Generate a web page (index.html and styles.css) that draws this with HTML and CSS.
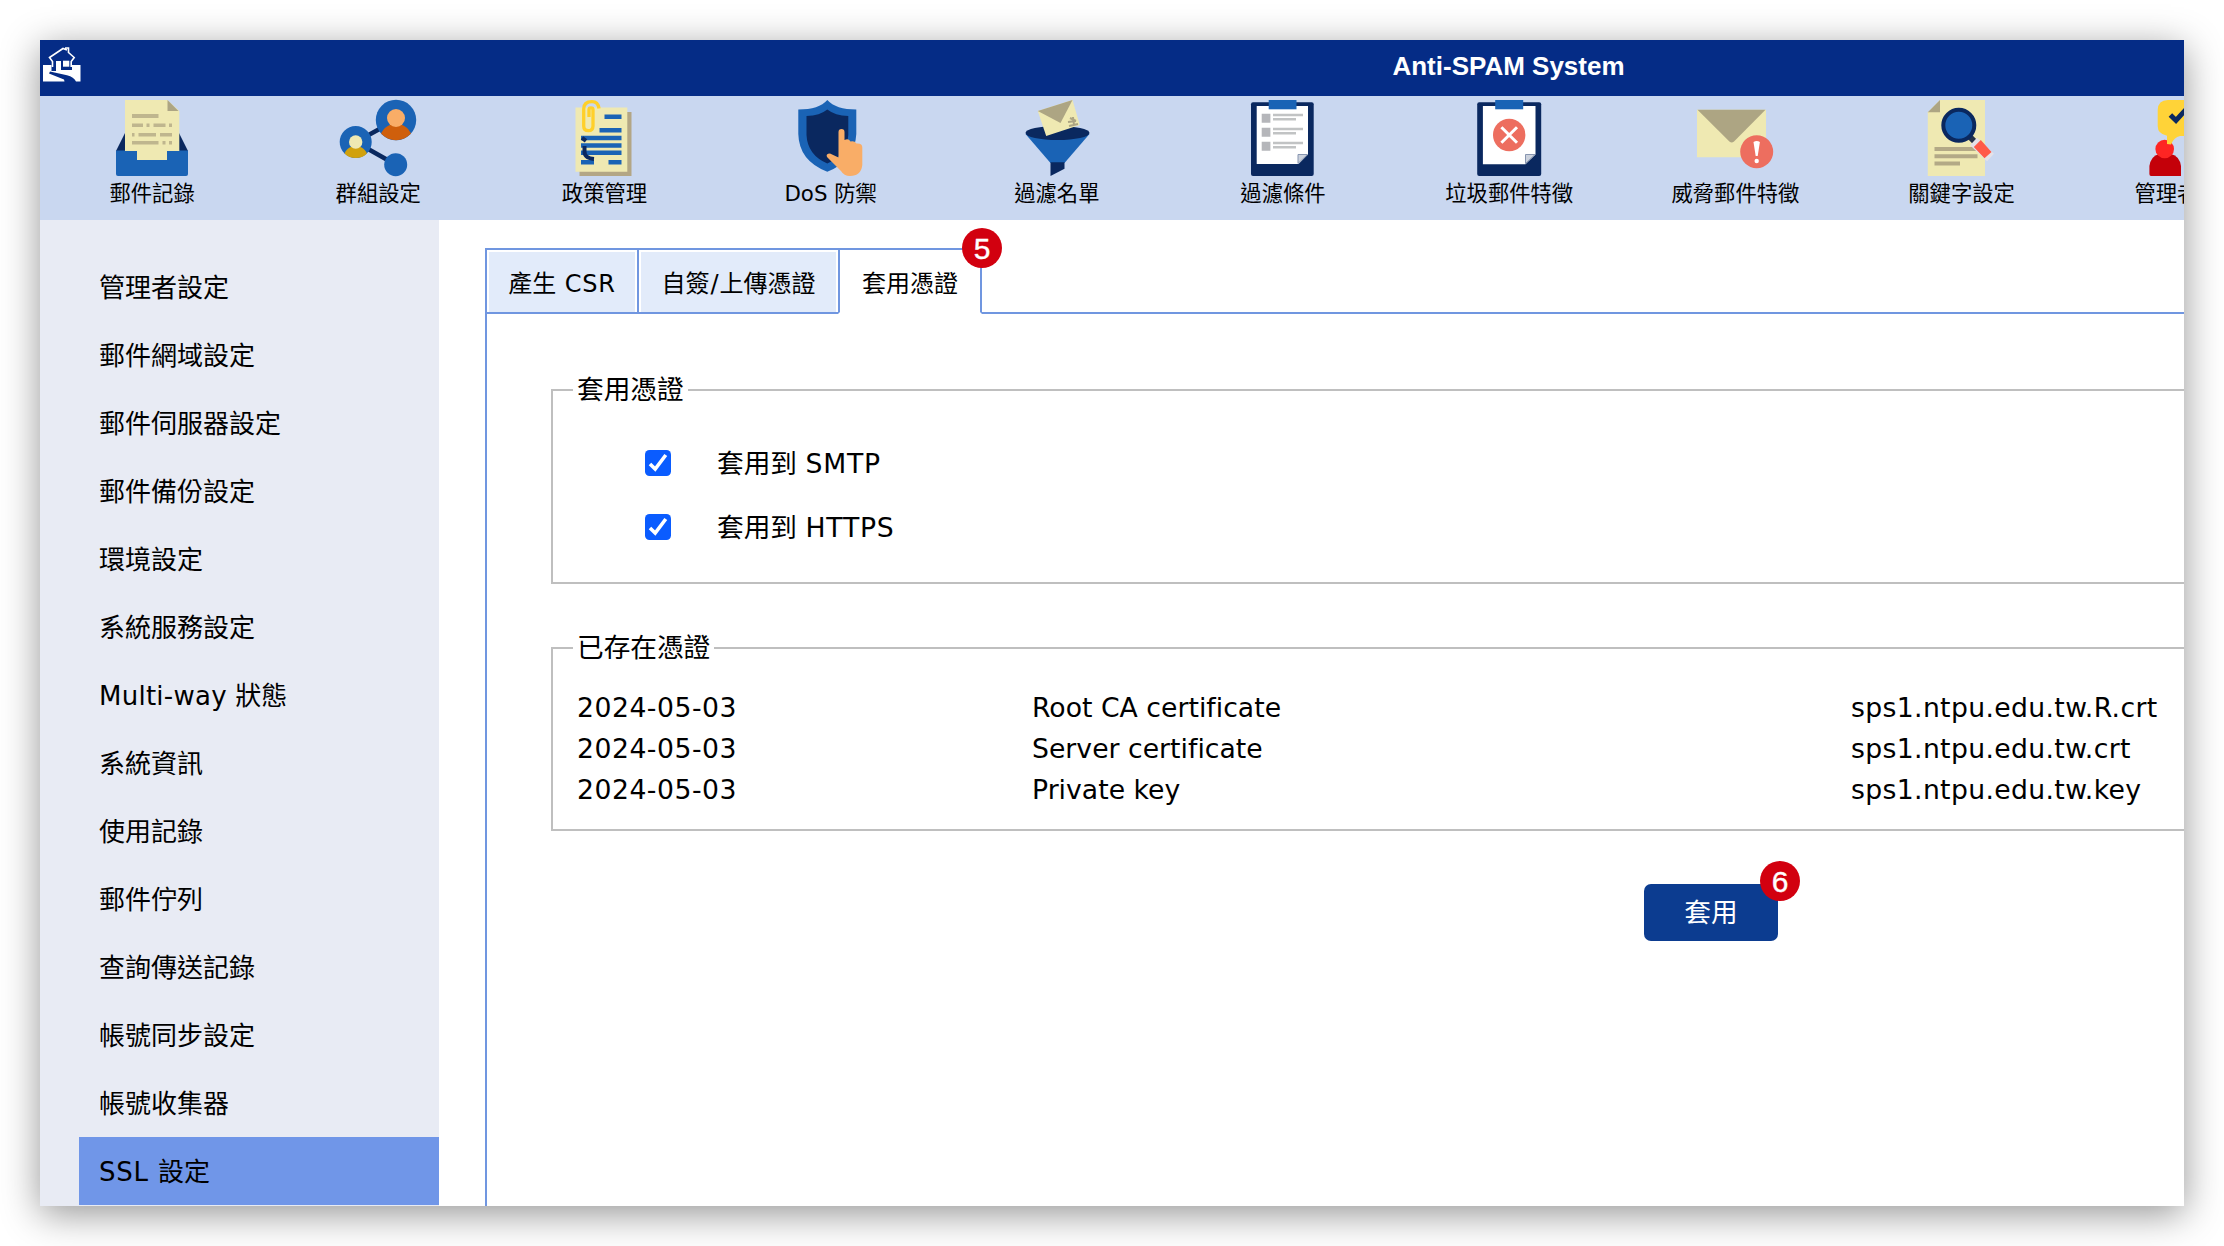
FILE: index.html
```html
<!DOCTYPE html>
<html lang="zh-Hant">
<head>
<meta charset="utf-8">
<title>Anti-SPAM System</title>
<link rel="stylesheet" href="styles.css">
</head>
<body>
<div class="window">
  <div class="page">
    <header class="header">
      <svg class="home" viewBox="0 0 38 35"><path fill="#fff" d="M0 18H8.500V24H13V14h5v9H29V18h8.500V34.500H33Q31 30 24 28.300L7 24.500 6 26.500 21 32.500 21.500 34.500H0z"/><path fill="none" stroke="#fff" stroke-width="1.600" d="M9.500 20V14.500L6.500 10.500 20 1.500l4 1.500M25.500 6V1H22M25.500 5.500l5.700 5-3 4V20"/><path fill="#fff" d="M20 13.700h6.300v6H20z"/></svg>
      <h1 class="title">Anti-SPAM System</h1>
    </header>
    <nav class="toolbar">
      <a class="tool">
        <svg class="icon" viewBox="0 0 76 76"><path fill="#0a285f" d="M2 51 11 33V51zM65 33l9 18h-9z"/><path fill="#1a63b5" d="M2 50.500H74V74a2 2 0 0 1-2 2H4a2 2 0 0 1-2-2z"/><path fill="#efe9b2" d="M11 0H53.500L65.300 11V51H53v9H23V51H11z"/><path fill="#ada583" d="M53.500 0v11h11z"/><path stroke="#bfb68e" stroke-width="4" d="M18 16H44.500"/><path stroke="#bfb68e" stroke-width="3.500" d="M18 25.300H29M32.500 25.300h3M39.500 25.300h12M55 25.300h3M18 34.700h2.500M24.500 34.700H42M46 34.700H58M18 42.700H44.500M48.500 42.700h3M55 42.700h3"/></svg>
        <span>郵件記錄</span></a>
      <a class="tool">
        <svg class="icon" viewBox="0 0 76 76"><path fill="none" stroke="#0a285f" stroke-width="4.500" d="M56 20 15.700 42 56 64.700"/><circle cx="56" cy="20" r="20.200" fill="#1a63b5"/><path fill="#cf5f0c" d="M41 33.500C45 26 50 24 56 24s11 2 15 9.500A20.200 20.200 0 0 1 41 33.500z"/><circle cx="56" cy="18" r="9" fill="#f9ad67"/><circle cx="15.700" cy="42" r="16" fill="#1a63b5"/><path fill="#d1a10d" d="M4.500 53.500C7 48 11 46 15.700 46s8.500 2 11.300 7.500A16 16 0 0 1 4.500 53.500z"/><circle cx="15.700" cy="42" r="6.700" fill="#efe9b2"/><circle cx="55.700" cy="64.700" r="11.500" fill="#1a63b5"/></svg>
        <span>群組設定</span></a>
      <a class="tool">
        <svg class="icon" viewBox="0 0 76 76"><path fill="#b3a685" d="M13.500 12h52v64h-52z"/><path fill="#efe9b2" d="M9.500 7.500H61.300v64.200H9.500z"/><path stroke="#1a63b5" stroke-width="4.500" d="M38.500 16.800h17M33.500 30.200h22M15 37.900h40.500M15 45.400h40.500M15 52.800h40.500M15 62.200h13M42.500 62.200h13"/><path fill="none" stroke="#0a285f" stroke-width="4" d="M16 37.900l4 3M18.500 46V51Q18 58 28 59"/><path fill="none" stroke="#ffd02a" stroke-width="3.300" d="M33 8.500Q32 1.700 26 1.700 17.700 1.700 17.700 9V26q0 4.700 4.600 4.700T27 26V9.500Q27 7.800 25 7.800T23 9.500V17"/></svg>
        <span>政策管理</span></a>
      <a class="tool">
        <svg class="icon" viewBox="0 0 76 76"><path fill="#1a63b5" d="M34.300 0Q43 9.500 63.300 9.500V34Q62 61 34.300 71.700 6 61 5.300 34V9.500Q26 9.500 34.300 0z"/><path fill="#0a285f" d="M34.300 9.500Q42 15.500 55.300 16V35Q54 55 34.300 63.500 14.500 55 13.500 35V16Q27 15.500 34.300 9.500z"/><path fill="#f9ad67" d="M45.500 32q0-3 3-3t3 3v8q4-2 6 1.500 4-1 6 2 5.800-.5 5.800 4V65Q68 76 57 76q-6 0-9-5L34 57q-1.500-3.500 3-3.500l8.500 4z"/></svg>
        <span>DoS 防禦</span></a>
      <a class="tool">
        <svg class="icon" viewBox="0 0 76 76"><path fill="#1a63b5" d="M6.500 34H70.500L45.500 63h-14z"/><ellipse cx="38.500" cy="33" rx="32" ry="7" fill="#0a285f"/><path fill="#0a285f" d="M31.500 62.300h14v6.500L31.500 76z"/><path fill="#efe9b2" d="M18.800 11 53.500 0l7.300 25L27.200 36z"/><path fill="#ada583" d="M18.800 11 53.500 0l-12 23z"/><path fill="none" stroke="#ada583" stroke-width="2" d="M51 18l6 3M49 22l8-1M50 26l9-2M54 17l1 8"/></svg>
        <span>過濾名單</span></a>
      <a class="tool">
        <svg class="icon" viewBox="0 0 76 76"><rect x="6" y="2.300" width="62.700" height="73.700" rx="2" fill="#0a285f"/><path fill="#fff" d="M11.700 6H63V54.500L53.500 64H11.700z"/><path fill="#cbd1dc" stroke="#8795b0" stroke-width="1" d="M53 63.500V54.500h9.500z"/><path fill="#1a63b5" d="M23.700 0H51.500V9.300H23.700z"/><path fill="#b5b6ba" d="M16.700 13.700h8.700v9h-8.700zM16.700 27.700h8.700v9h-8.700zM16.700 41.700h8.700v9h-8.700z"/><path stroke="#c1c3c4" stroke-width="2.400" d="M28 15H58M28 19.300H51M28 29H58M28 33.300H51M28 43H58M28 47.300H51"/></svg>
        <span>過濾條件</span></a>
      <a class="tool">
        <svg class="icon" viewBox="0 0 76 76"><rect x="6.200" y="2.300" width="64" height="73.700" rx="2" fill="#0a285f"/><path fill="#fff" d="M11.900 6H64.500V54.500L54.500 64.300H11.900z"/><path fill="#cbd1dc" stroke="#8795b0" stroke-width="1" d="M54.500 63.500V54.500h9.500z"/><path fill="#1a63b5" d="M24.200 0h28V9.300h-28z"/><circle cx="38.200" cy="35" r="16.200" fill="#ed6e5f"/><path stroke="#fff" stroke-width="3" d="M30.400 27.200l15.600 15.600M46 27.200 30.400 42.800"/></svg>
        <span>垃圾郵件特徵</span></a>
      <a class="tool">
        <svg class="icon" viewBox="0 0 76 76"><path fill="#efe9b2" d="M0 9.700H69V57.300H0z"/><path fill="#ada583" d="M.5 9.700H68.500L37 41.500q-2.300 2-4.600 0z"/><circle cx="59.700" cy="51.700" r="16.500" fill="#ed6e5f"/><path fill="#fff" d="M56.500 42q3.200-2 6.400 0L60.700 56h-2z"/><circle cx="59.700" cy="61" r="2.200" fill="#fff"/></svg>
        <span>威脅郵件特徵</span></a>
      <a class="tool">
        <svg class="icon" viewBox="0 0 76 76"><path fill="#efe9b2" d="M16 0H61V76H3.800V12.300z"/><path fill="#ada583" d="M16 0V12.300H3.800z"/><path stroke="#b3a986" stroke-width="4" d="M10.500 49H53.500M10.500 56.200H53.500M10.500 63.400H36"/><path stroke="#253247" stroke-width="6" d="M45 36l6 6"/><path stroke="#e4e1e8" stroke-width="10" d="M49.500 41.500 66.500 57.500"/><path fill="#ff5a48" d="M56.800 40 67.500 52l-7 6.300L49.800 47z"/><circle cx="34.800" cy="25.300" r="15.500" fill="#1a63b5" stroke="#0a285f" stroke-width="4"/></svg>
        <span>關鍵字設定</span></a>
      <a class="tool">
        <svg class="icon" viewBox="0 0 76 76"><path fill="#c40009" d="M-.6 74V66Q1 56 9 54H21Q29.500 56 31 66V76H1Q-.6 76-.6 74z"/><circle cx="14.700" cy="49" r="9.300" fill="#fe2523"/><path fill="#ffd338" d="M18 0H66q10 0 10 10V26q0 10-10 10H30q-6 1-9 8.500L17 44V35.700Q7.700 34 7.700 26V10Q8 0 18 0z"/><path fill="none" stroke="#0a285f" stroke-width="5" d="M20.400 15l5.600 5.500L40 5"/></svg>
        <span>管理者設定</span></a>
    </nav>
    <div class="main">
      <ul class="sidebar">
        <li>管理者設定</li>
        <li>郵件網域設定</li>
        <li>郵件伺服器設定</li>
        <li>郵件備份設定</li>
        <li>環境設定</li>
        <li>系統服務設定</li>
        <li><span class="latin-tight">Multi-way </span>狀態</li>
        <li>系統資訊</li>
        <li>使用記錄</li>
        <li>郵件佇列</li>
        <li>查詢傳送記錄</li>
        <li>帳號同步設定</li>
        <li>帳號收集器</li>
        <li class="active"><span class="latin">SSL </span>設定</li>
      </ul>
      <section class="content">
        <div class="tabs">
          <div class="tab tab-csr"><span>產生<i class="latin"> CSR</i></span></div>
          <div class="tab tab-upload"><span>自簽<i class="slash">/</i>上傳憑證</span></div>
          <div class="tab current"><span>套用憑證</span><b class="badge">5</b></div>
          <div class="rest"></div>
        </div>
        <div class="panel">
          <div class="group apply">
            <div class="legend">套用憑證</div>
            <label class="check"><svg viewBox="0 0 26 26"><rect width="26" height="26" rx="4.500" fill="#0a5cff"/><path fill="none" stroke="#fff" stroke-width="3.600" d="M5 14l5.200 5L20.800 5"/></svg><span>套用到 <i class="latin">SMTP</i></span></label>
            <label class="check"><svg viewBox="0 0 26 26"><rect width="26" height="26" rx="4.500" fill="#0a5cff"/><path fill="none" stroke="#fff" stroke-width="3.600" d="M5 14l5.200 5L20.800 5"/></svg><span>套用到 <i class="latin">HTTPS</i></span></label>
          </div>
          <div class="group certs">
            <div class="legend">已存在憑證</div>
            <div class="row"><span class="date">2024-05-03</span><span class="kind">Root CA certificate</span><span class="file">sps1.ntpu.edu.tw.R.crt</span></div>
            <div class="row"><span class="date">2024-05-03</span><span class="kind">Server certificate</span><span class="file">sps1.ntpu.edu.tw.crt</span></div>
            <div class="row"><span class="date">2024-05-03</span><span class="kind">Private key</span><span class="file">sps1.ntpu.edu.tw.key</span></div>
          </div>
          <div class="actions"><button class="apply-btn">套用<b class="badge">6</b></button></div>
        </div>
      </section>
    </div>
  </div>
</div>
</body>
</html>
```
FILE: styles.css
```css
* { box-sizing: border-box; }

body {
  margin: 0;
  padding: 40px;
  height: 1246px;
  overflow: hidden;
  background: #fff;
  color: #000;
  font-family: "DejaVu Sans", "Noto Sans CJK TC", sans-serif;
  font-size: 26.67px;
}

.window {
  width: 2144px;
  height: 1166px;
  overflow: hidden;
  background: #fff;
  box-shadow: 0 8px 36px rgba(0, 0, 0, .42);
}

/* the page is wider than the window that shows it */
.page {
  width: 2937px;
  height: 100%;
  display: flex;
  flex-direction: column;
}

.header {
  height: 56px;
  flex: none;
  background: #052c86;
  display: flex;
  align-items: flex-start;
}

.home { width: 38px; height: 35px; margin: 7px 0 0 3px; overflow: visible; }

.title {
  flex: 1;
  margin: 0 41px 0 0;
  text-align: center;
  color: #fff;
  font: bold 26px/52px "Liberation Sans", Arial, sans-serif;
}

.toolbar {
  height: 124px;
  flex: none;
  display: flex;
  margin-left: -1px;
  padding-top: 4px;
  background: #c9d7f0;
}

.tool {
  width: 226.2px;
  flex: none;
  display: flex;
  flex-direction: column;
  align-items: center;
  font-size: 21.33px;
  line-height: 36px;
  white-space: nowrap;
}

.icon { width: 76px; height: 76px; flex: none; overflow: visible; }

.main { flex: 1; display: flex; min-height: 0; }

.sidebar {
  width: 399px;
  flex: none;
  margin: 0;
  padding: 33px 0 0 39px;
  list-style: none;
  background: #e8ebf4;
  font-size: 26px;
}

.sidebar li { height: 68px; padding-left: 20px; line-height: 71px; white-space: nowrap; }
.sidebar .active { background: #7096e8; }
.latin { font-style: normal; letter-spacing: .8px; }
.latin-tight { letter-spacing: .25px; }
.slash { font-style: normal; padding: 0 1px; }

.content {
  flex: 1;
  margin: 28px 40px 0 46px;
  display: flex;
  flex-direction: column;
}

.tabs { display: flex; height: 66px; flex: none; font-size: 24px; }

.tab {
  border: solid #7096e0;
  border-width: 2px 0 2px 2px;
  padding: 2px 2px 0;
  text-align: center;
  line-height: 65px;
  white-space: nowrap;
}

.tab span { display: block; height: 60px; background: #e2ebfa; }
.tab-csr { width: 152px; }
.tab-upload { width: 201px; }

.current {
  width: 144px;
  position: relative;
  border-right-width: 2px;
  border-bottom-color: #fff;
}

.current span { background: none; }
.rest { flex: 1; border-bottom: 2px solid #7096e0; }

.badge {
  position: absolute;
  width: 40px;
  height: 40px;
  border-radius: 50%;
  background: #d2000f;
  color: #fff;
  text-align: center;
  font: 30px/41px "Liberation Sans", Arial, sans-serif;
  -webkit-text-stroke: .4px #fff;
}

.current .badge { right: -22px; top: -22px; }

.panel {
  flex: 1;
  border: solid #7096e0;
  border-width: 0 2px;
  padding: 75px 64px 0;
}

.group { border: 2px solid #bfbfbf; padding: 0 0 0 22px; }

.legend {
  width: max-content;
  height: 38px;
  line-height: 38px;
  margin: -20px 0 0 -2px;
  padding: 0 4px;
  background: #fff;
}

.apply { height: 195px; }
.apply .legend { margin-bottom: 22px; }
.check { display: flex; align-items: center; height: 64px; padding-left: 70px; gap: 46px; }
.check svg { width: 26px; height: 26px; }
.check span { padding-bottom: 3px; }
.certs { height: 184px; margin-top: 63px; }
.certs .legend { margin-bottom: 20px; }

.row {
  display: grid;
  grid-template-columns: 455px 819px 1fr;
  height: 41px;
  line-height: 41px;
  padding-left: 2px;
}

.date { letter-spacing: .5px; }
.kind { letter-spacing: .02px; }
.file { letter-spacing: .35px; }

.actions { display: flex; justify-content: center; margin-top: 53px; }

.apply-btn {
  position: relative;
  width: 134px;
  height: 57px;
  padding: 0 0 3px;
  border: 0;
  border-radius: 7px;
  background: #0c3c90;
  color: #fff;
  font: 26.67px/54px "Noto Sans CJK TC", sans-serif;
}

.apply-btn .badge { right: -22px; top: -23px; }
```
